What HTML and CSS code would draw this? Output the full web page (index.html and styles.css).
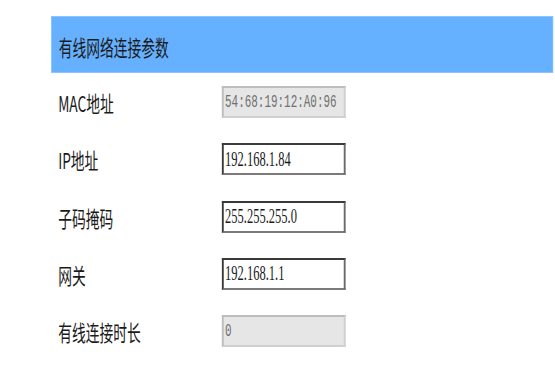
FILE: index.html
```html
<!DOCTYPE html>
<html lang="zh-CN">
<head>
    <meta charset="UTF-8">
    <meta name="viewport" content="width=device-width, initial-scale=1.0">
    <title>有线网络连接参数</title>
    <link rel="stylesheet" href="styles.css">
</head>
<body>
    <div class="frame">
        <div class="page">
            <div class="panel-title">有线网络连接参数</div>
            <div class="form">
                <div class="row">
                    <label for="mac">MAC地址</label>
                    <input id="mac" class="field readonly" type="text" value="54:68:19:12:A0:96" disabled>
                </div>
                <div class="row">
                    <label for="ip">IP地址</label>
                    <input id="ip" class="field" type="text" value="192.168.1.84">
                </div>
                <div class="row">
                    <label for="mask">子码掩码</label>
                    <input id="mask" class="field" type="text" value="255.255.255.0">
                </div>
                <div class="row">
                    <label for="gw">网关</label>
                    <input id="gw" class="field" type="text" value="192.168.1.1">
                </div>
                <div class="row">
                    <label for="uptime">有线连接时长</label>
                    <input id="uptime" class="field readonly" type="text" value="0" disabled>
                </div>
            </div>
        </div>
    </div>
</body>
</html>
```

FILE: styles.css
```css
html, body {
    margin: 0;
    padding: 0;
    overflow: hidden;
}
body {
    background-color: #FFFFFF;
    font-family: "Noto Sans CJK SC", "Liberation Sans", sans-serif;
}
.frame {
    width: 555px;
    height: 365px;
    overflow: hidden;
}
/* the whole screen is drawn narrow, so lay it out wide and squeeze it */
.page {
    width: 888px;
    padding-top: 16px;
    padding-left: 82px;
    padding-right: 3px;
    box-sizing: border-box;
    transform: scaleX(0.625);
    transform-origin: 0 0;
}
.panel-title {
    height: 57px;
    box-sizing: border-box;
    background-color: #66B1FF;
    border: 1px solid #8CC4FF;
    color: #1C1C1C;
    font-size: 22px;
    display: flex;
    align-items: center;
    padding: 3px 0 0 11px;
}
.form {
    display: flex;
    flex-direction: column;
    gap: 25.3px;
    padding-top: 13px;
}
.row {
    display: flex;
    align-items: center;
    height: 32px;
}
.row label {
    width: 262px;
    padding-left: 11px;
    font-size: 22px;
    color: #1A1A1A;
}
.field {
    width: 198px;
    height: 32px;
    box-sizing: border-box;
    margin: 0;
    padding: 0 0 0 2px;
    font-family: "Liberation Serif", serif;
    font-size: 20px;
    color: #1A1A1A;
    background-color: #FFFFFF;
    border-style: solid;
    border-color: #3A3A3A #6A6A6A #7A7A7A #3A3A3A;
    border-width: 2px 3px 2px 3px;
    outline: none;
}
.field.readonly {
    font-family: "Liberation Mono", monospace;
    font-size: 17.5px;
    color: #707070;
    background-color: #E6E6E6;
    border-color: #BDBDBD #D0D0D0 #D0D0D0 #BDBDBD;
}
```
